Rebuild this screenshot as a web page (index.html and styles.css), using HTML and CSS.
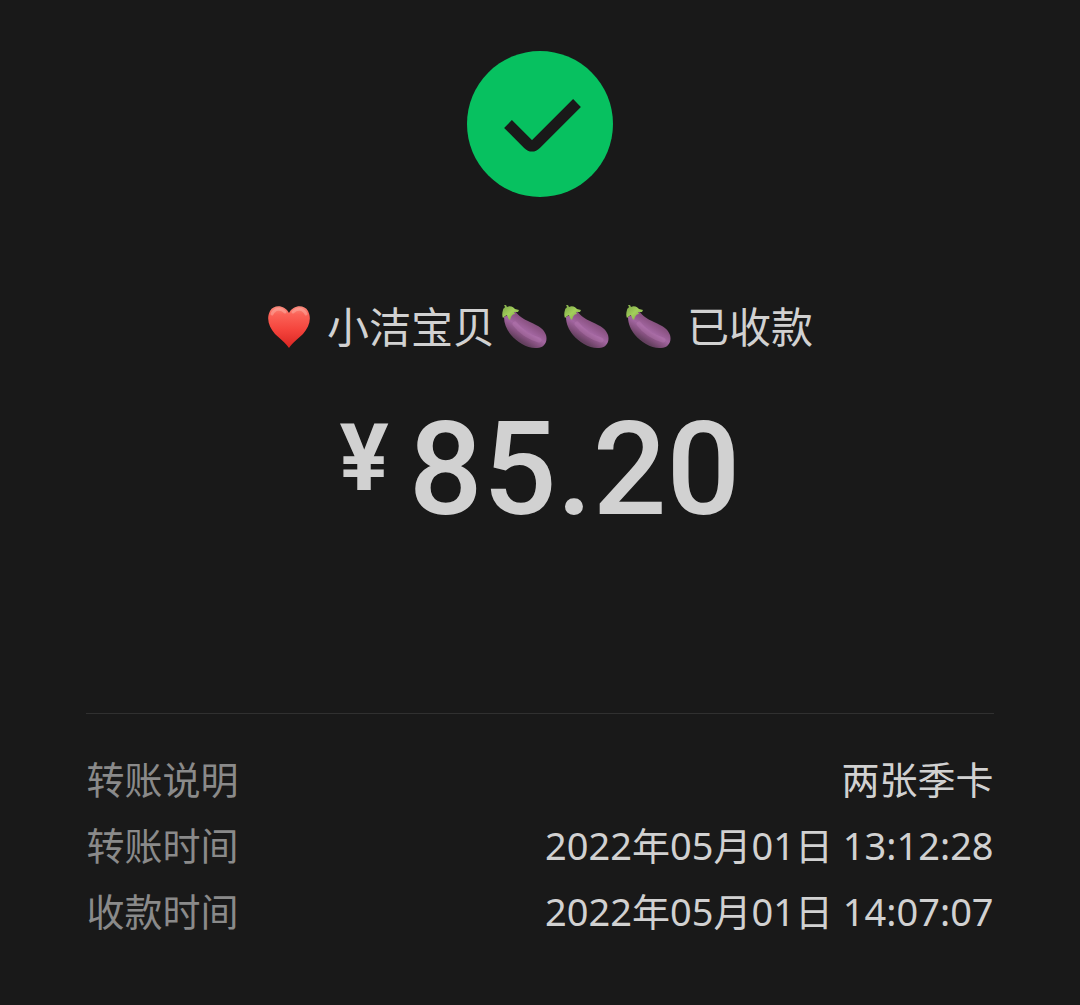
FILE: index.html
```
<!DOCTYPE html>
<html lang="zh-CN">
<head>
  <meta charset="UTF-8" />
  <meta name="viewport" content="width=device-width, initial-scale=1.0" />
  <title>转账详情</title>
  <link rel="stylesheet" href="styles.css">
</head>
<body>

  <!-- Shared emoji drawing -->
  <svg class="sprite" aria-hidden="true">
    <defs>
      <linearGradient id="skin" x1="0.7" y1="0.2" x2="0.3" y2="0.75">
        <stop offset="0" stop-color="#75496f" />
        <stop offset="0.3" stop-color="#8f5688" />
        <stop offset="0.55" stop-color="#a266a0" />
        <stop offset="0.8" stop-color="#84507e" />
        <stop offset="1" stop-color="#64405f" />
      </linearGradient>
      <linearGradient id="leaf" x1="0" y1="0" x2="1" y2="1">
        <stop offset="0" stop-color="#7ba446" />
        <stop offset="0.5" stop-color="#a3cf5b" />
        <stop offset="1" stop-color="#769f45" />
      </linearGradient>
      <symbol id="eggplant" viewBox="0 0 46 46">
        <path fill="url(#skin)" d="M14 7C18 12 22 15 29 18C38 22 43 25 45 31C47 38 43 44 36 44C27 45 16 38 10 31C6 26 3 20 3 13Z" />
        <path class="shine" d="M14 20C20 28 28 33 38 36" />
        <path fill="url(#leaf)" d="M3 1L5 1L6 3C10 1 13 4 14 5L18 6L17 8L13 8L14 10C12 10 11 11 10 13L9 16C7 15 7 13 6 11C4 12 3 13 2 14C1 12 1 9 2 6C2 4 4 4 4 3Z" />
      </symbol>
    </defs>
  </svg>

  <main class="receipt">
    <svg class="status-icon" viewBox="0 0 146 146" role="img" aria-label="已收款">
      <circle cx="73" cy="73" r="73" />
      <path d="M41 73L61 93Q65 97 69 93L110 52" />
    </svg>

    <h1 class="payee">
      <svg class="emoji heart" viewBox="0 0 44 44" role="img" aria-label="红心">
        <defs>
          <linearGradient id="red" x1="0" y1="0" x2="0" y2="1">
            <stop offset="0" stop-color="#f98a7c" />
            <stop offset="0.2" stop-color="#fb6257" />
            <stop offset="0.55" stop-color="#f5453d" />
            <stop offset="1" stop-color="#d92522" />
          </linearGradient>
        </defs>
        <path fill="url(#red)" d="M22 8C18 0 7 -1 3 6C-1 14 2 22 8 29C13 34 19 38 22 43C25 38 31 34 36 29C42 22 45 14 41 6C37 -1 26 0 22 8Z" />
        <path class="glow" d="M5 9C8 3 14 3 18 7M26 7C30 3 36 3 39 9" />
      </svg>
      <span>小洁宝贝</span>
      <span class="emoji-group">
        <svg class="emoji" role="img" aria-label="茄子"><use href="#eggplant" /></svg>
        <svg class="emoji" role="img" aria-label="茄子"><use href="#eggplant" /></svg>
        <svg class="emoji" role="img" aria-label="茄子"><use href="#eggplant" /></svg>
      </span>
      <span>已收款</span>
    </h1>

    <p class="amount"><span class="currency">¥</span><span>85.20</span></p>

    <dl class="details">
      <div class="row">
        <dt>转账说明</dt>
        <dd>两张季卡</dd>
      </div>
      <div class="row">
        <dt>转账时间</dt>
        <dd>2022年05月01日 13:12:28</dd>
      </div>
      <div class="row">
        <dt>收款时间</dt>
        <dd>2022年05月01日 14:07:07</dd>
      </div>
    </dl>
  </main>

</body>
</html>
```
FILE: styles.css
```
* {
  box-sizing: border-box;
}

body {
  margin: 0;
  background-color: #191919;
  color: #d1d1d1;
  font-family: "Noto Sans", "Noto Sans CJK SC", sans-serif;
}

.sprite {
  display: block;
  width: 0;
  height: 0;
}

.receipt {
  display: flex;
  flex-direction: column;
  align-items: center;
  padding: 51px 8% 60px;
}

/* Green success badge */
.status-icon {
  width: 146px;
  height: 146px;
}

.status-icon circle {
  fill: #07c160;
}

.status-icon path {
  fill: none;
  stroke: #191919;
  stroke-width: 11;
}

/* Payee line */
.payee {
  display: flex;
  align-items: center;
  margin: 100px 0 0;
  font-size: 42px;
  font-weight: 400;
  line-height: 60px;
}

.emoji {
  width: 46px;
  height: 46px;
}

.heart {
  width: 44px;
  height: 44px;
  margin-right: 16px;
}

.emoji-group {
  display: flex;
  gap: 16px;
  margin: 0 16px 0 6px;
}

.shine,
.glow {
  fill: none;
  stroke-linecap: round;
}

.shine {
  stroke: #c080b9;
  stroke-width: 5;
  opacity: 0.3;
}

.glow {
  stroke: #ffc0b5;
  stroke-width: 3;
  opacity: 0.4;
}

/* Amount */
.amount {
  display: flex;
  align-items: flex-start;
  gap: 20px;
  margin: 42px 0 0;
  font-family: Roboto, sans-serif;
  font-size: 130px;
  font-weight: 500;
  line-height: 142px;
}

.currency {
  font-size: 92px;
  font-weight: 700;
  line-height: 120px;
}

/* Transfer details */
.details {
  width: 100%;
  margin: 172px 0 0;
  padding-top: 32px;
  border-top: 1px solid #303030;
  font-size: 38px;
  line-height: 66px;
}

.row {
  display: flex;
  justify-content: space-between;
}

.row dt {
  color: #8a8a8a;
}

.row dd {
  margin: 0;
  text-align: right;
}
```
